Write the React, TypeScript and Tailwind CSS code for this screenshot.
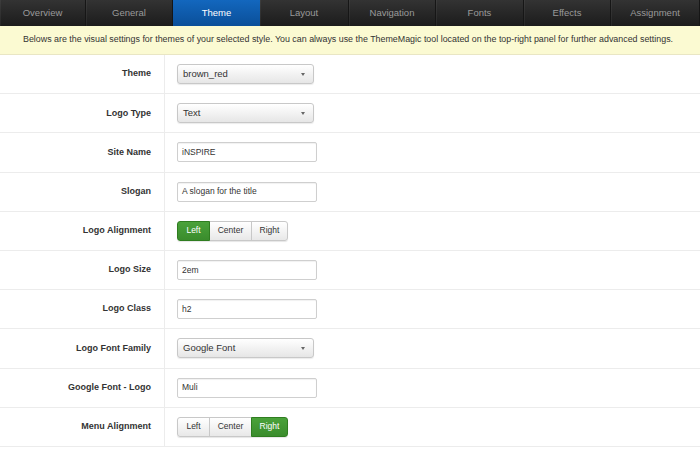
import React from "react";

const tabs = [
  { t: "Overview", w: "w-[86px]" },
  { t: "General", w: "w-[87px]" },
  { t: "Theme", w: "w-[87px]" },
  { t: "Layout", w: "w-[89px]" },
  { t: "Navigation", w: "w-[87px]" },
  { t: "Fonts", w: "w-[88px]" },
  { t: "Effects", w: "w-[87px]" },
  { t: "Assignment", w: "w-[89px]" },
];

function Select({ value }: { value: string }) {
  return (
    <div className="relative flex h-[20px] w-[137px] items-center rounded-[3px] border border-[#c8c8c8] bg-gradient-to-b from-[#ffffff] to-[#e6e6e6] pl-[5px] text-[9.5px] text-[#333] shadow-[0_1px_1px_rgba(0,0,0,0.08)]">
      {value}
      <span className="absolute right-[8px] top-[8px] h-0 w-0 border-x-[2.5px] border-t-[3px] border-x-transparent border-t-[#666]" />
    </div>
  );
}

function Input({ value }: { value: string }) {
  return (
    <div className="flex h-[20px] w-[140px] items-center rounded-[2px] border border-[#cfcfcf] bg-white pl-[4px] text-[8.5px] text-[#333] shadow-[inset_0_1px_1px_rgba(0,0,0,0.06)]">
      {value}
    </div>
  );
}

function Seg({ active }: { active: number }) {
  const items = [
    { t: "Left", w: "w-[33px]" },
    { t: "Center", w: "w-[43px]" },
    { t: "Right", w: "w-[37px]" },
  ];
  return (
    <div className="flex h-[20px] rounded-[3px] shadow-[0_1px_1px_rgba(0,0,0,0.1)]">
      {items.map((it, i) => (
        <div
          key={it.t}
          className={
            "flex items-center justify-center border text-[8.5px] " +
            it.w +
            (i === 0 ? " rounded-l-[3px]" : " -ml-px") +
            (i === 2 ? " rounded-r-[3px]" : "") +
            (i === active
              ? " relative z-10 border-[#2f7d20] bg-gradient-to-b from-[#4aa23a] to-[#3a8c2c] text-white"
              : " border-[#c8c8c8] bg-gradient-to-b from-[#ffffff] to-[#e8e8e8] text-[#333]")
          }
        >
          {it.t}
        </div>
      ))}
    </div>
  );
}

const rows: { label: string; el: React.ReactNode }[] = [
  { label: "Theme", el: <Select value="brown_red" /> },
  { label: "Logo Type", el: <Select value="Text" /> },
  { label: "Site Name", el: <Input value="iNSPIRE" /> },
  { label: "Slogan", el: <Input value="A slogan for the title" /> },
  { label: "Logo Alignment", el: <Seg active={0} /> },
  { label: "Logo Size", el: <Input value="2em" /> },
  { label: "Logo Class", el: <Input value="h2" /> },
  { label: "Logo Font Family", el: <Select value="Google Font" /> },
  { label: "Google Font - Logo", el: <Input value="Muli" /> },
  { label: "Menu Alignment", el: <Seg active={2} /> },
];

export default function App() {
  return (
    <div className="h-[450px] w-[700px] overflow-hidden bg-white font-['Liberation_Sans',Arial,sans-serif]">
      <div className="flex h-[26px] bg-gradient-to-b from-[#333333] to-[#1c1c1c]">
        {tabs.map((tab, i) => (
          <div
            key={tab.t}
            className={
              "box-border flex shrink-0 items-center justify-center text-[9.5px] " +
              tab.w +
              " " +
              (i === 2
                ? "bg-gradient-to-b from-[#1367be] to-[#0a4f99] text-white"
                : "border-r border-[#161616] text-[#9a9a9a] shadow-[inset_1px_0_0_rgba(255,255,255,0.05)]")
            }
          >
            {tab.t}
          </div>
        ))}
      </div>
      <div className="flex h-[29px] items-center border-b border-[#e9e6c4] bg-[#fbfad2] pl-[23px] text-[8.9px] text-[#333]">
        Belows are the visual settings for themes of your selected style. You can always use the ThemeMagic tool located on the top-right panel for further advanced settings.
      </div>
      {rows.map((r) => (
        <div key={r.label} className="flex h-[39.2px] border-b border-[#ececec]">
          <div className="flex w-[165px] items-center justify-end border-r border-[#ececec] pr-[13px] text-[9px] font-bold text-[#333]">
            {r.label}
          </div>
          <div className="flex items-center pl-[12px]">{r.el}</div>
        </div>
      ))}
    </div>
  );
}
